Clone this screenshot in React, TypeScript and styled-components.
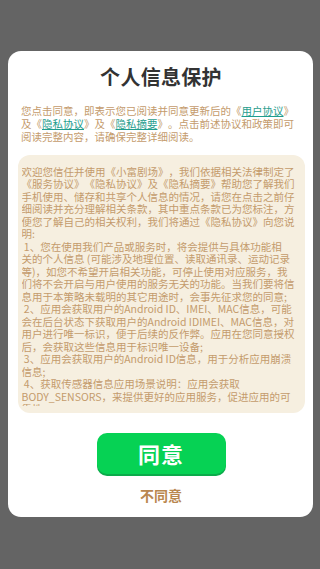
import React from "react";
import styled, { createGlobalStyle } from "styled-components";

const Global = createGlobalStyle`
  html, body {
    margin: 0;
    padding: 0;
    background: #646464;
  }
  body {
    font-family: "Noto Sans CJK SC", "Noto Sans", sans-serif;
    text-spacing-trim: space-all;
  }
`;

const Page = styled.div`
  width: 320px;
  height: 569px;
  background: #646464;
  display: flex;
  flex-direction: column;
  align-items: center;
  padding-top: 51px;
  box-sizing: border-box;
  overflow: hidden;
`;

const Dialog = styled.div`
  width: 305px;
  background: #ffffff;
  border-radius: 13px;
  padding: 12px 8px 12px 10px;
  box-sizing: border-box;
  display: flex;
  flex-direction: column;
  align-items: stretch;
`;

const Title = styled.h1`
  margin: 0;
  font-size: 20px;
  line-height: 28px;
  font-weight: 700;
  color: #333333;
  text-align: center;
  letter-spacing: 0.3px;
`;

const Intro = styled.div`
  margin: 12.5px 0 0 3.5px;
  font-size: 10.5px;
  line-height: 13px;
  color: #c49b6c;
`;

const Line = styled.div<{ $h: number }>`
  white-space: pre;
  height: ${(p) => p.$h}px;
  text-spacing-trim: space-all;
`;

const Link = styled.span`
  color: #1f9d8d;
  text-decoration: underline;
  text-underline-offset: 1px;
`;

const TermsBox = styled.div`
  margin-top: 12.5px;
  height: 258px;
  background: #f6efe0;
  border-radius: 12px;
  padding: 10.5px 6px 7px 4px;
  box-sizing: border-box;
  display: flex;
`;

const TermsScroll = styled.div`
  flex: 1;
  overflow: hidden;
  font-size: 10.5px;
  line-height: 12.5px;
  color: #c49b6c;
`;

const Actions = styled.div`
  display: flex;
  flex-direction: column;
  align-items: center;
  margin-top: 20px;
`;

const AgreeButton = styled.button`
  width: 129px;
  height: 41px;
  border: none;
  border-radius: 10px;
  background: #06d254;
  box-shadow: 0 2px 0 #0bab4a;
  color: #ffffff;
  font-family: "Noto Sans CJK SC", sans-serif;
  font-size: 22px;
  font-weight: 700;
  letter-spacing: 1px;
  line-height: 41px;
  padding: 0;
  cursor: pointer;
`;

const RejectButton = styled.button`
  margin-top: 11px;
  background: none;
  border: none;
  padding: 0;
  font-family: "Noto Sans CJK SC", sans-serif;
  font-size: 14px;
  line-height: 20px;
  font-weight: 700;
  color: #b9874f;
  cursor: pointer;
`;

const terms = [
  "欢迎您信任并使用《小富剧场》，我们依据相关法律制定了",
  "《服务协议》《隐私协议》及《隐私摘要》帮助您了解我们",
  "手机使用、储存和共享个人信息的情况，请您在点击之前仔",
  "细阅读并充分理解相关条款，其中重点条款已为您标注，方",
  "便您了解自己的相关权利，我们将通过《隐私协议》向您说",
  "明:",
  " 1、您在使用我们产品或服务时，将会提供与具体功能相",
  "关的个人信息 (可能涉及地理位置、读取通讯录、运动记录",
  "等)，如您不希望开启相关功能，可停止使用对应服务，我",
  "们将不会开启与用户使用的服务无关的功能。当我们要将信",
  "息用于本策略未载明的其它用途时，会事先征求您的同意;",
  " 2、应用会获取用户的Android ID、IMEI、MAC信息，可能",
  "会在后台状态下获取用户的Android IDIMEI、MAC信息，对",
  "用户进行唯一标识，便于后续的反作弊。应用在您同意授权",
  "后，会获取这些信息用于标识唯一设备;",
  " 3、应用会获取用户的Android ID信息，用于分析应用崩溃",
  "信息;",
  " 4、获取传感器信息应用场景说明：应用会获取",
  "BODY_SENSORS，来提供更好的应用服务，促进应用的可",
  "靠性。",
];

export default function App() {
  return (
    <>
      <Global />
      <Page>
        <Dialog>
          <Title>个人信息保护</Title>
          <Intro>
            <Line $h={13}>
              您点击同意，即表示您已阅读并同意更新后的《<Link>用户协议</Link>》
            </Line>
            <Line $h={13}>
              及《<Link>隐私协议</Link>》及《<Link>隐私摘要</Link>》。点击前述协议和政策即可
            </Line>
            <Line $h={13}>阅读完整内容，请确保完整详细阅读。</Line>
          </Intro>
          <TermsBox>
            <TermsScroll>
              {terms.map((t, i) => (
                <Line $h={12.5} key={i}>
                  {t}
                </Line>
              ))}
            </TermsScroll>
          </TermsBox>
          <Actions>
            <AgreeButton>同意</AgreeButton>
            <RejectButton>不同意</RejectButton>
          </Actions>
        </Dialog>
      </Page>
    </>
  );
}
